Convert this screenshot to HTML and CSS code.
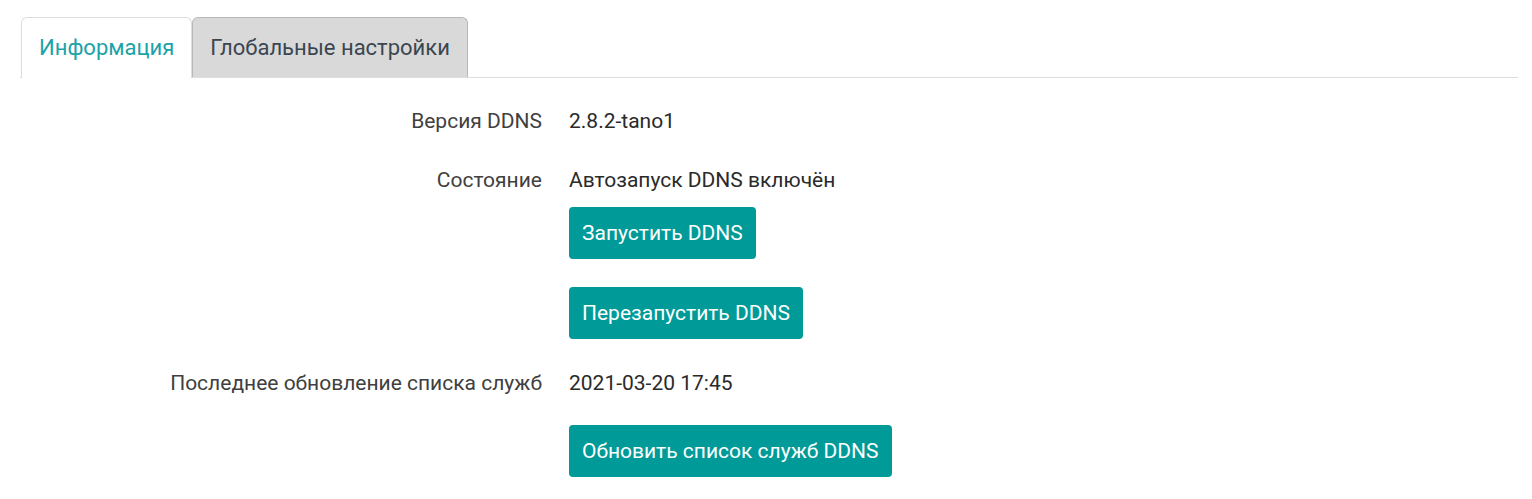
FILE: index.html
```html
<!DOCTYPE html>
<html>
<head>
	<meta charset="utf-8">
	<title>DDNS</title>
	<link rel="stylesheet" href="styles.css">
</head>
<body>
	<div class="page">
		<ul class="tabs">
			<li class="tab active">Информация</li>
			<li class="tab">Глобальные настройки</li>
		</ul>
		<div class="section">
			<div class="row">
				<div class="label">Версия DDNS</div>
				<div class="value">2.8.2-tano1</div>
			</div>
			<div class="row row-state">
				<div class="label">Состояние</div>
				<div class="value">
					Автозапуск DDNS включён
					<div class="actions">
						<button class="btn">Запустить DDNS</button>
						<button class="btn">Перезапустить DDNS</button>
					</div>
				</div>
			</div>
			<div class="row row-update">
				<div class="label">Последнее обновление списка служб</div>
				<div class="value">
					2021-03-20 17:45
					<div class="actions">
						<button class="btn">Обновить список служб DDNS</button>
					</div>
				</div>
			</div>
		</div>
	</div>
</body>
</html>
```

FILE: styles.css
```css
html, body {
	background: #fff;
	font: 21px Roboto, "Liberation Sans", Arial, sans-serif;
	margin: 0;
	padding: 0;
}
body {
	color: #333;
}
.page {
	padding: 17px 14px 0 20px;
}
.tabs {
	border-bottom: 1px solid #ddd;
	display: flex;
	list-style: none;
	margin: 0;
	padding: 0 0 0 1px;
}
.tab {
	background: #d9d9d9;
	border: 1px solid #b8b8b8;
	border-bottom: none;
	border-radius: 6px 6px 0 0;
	color: #3b4651;
	font-size: 22px;
	height: 59px;
	line-height: 59px;
	margin-bottom: -1px;
	padding: 0 17px;
}
.tab.active {
	background: #fff;
	border-color: #ddd;
	color: #1ba3a8;
	height: 60px;
}
.section {
	padding-top: 31px;
}
.row {
	column-gap: 27px;
	display: grid;
	grid-template-columns: 522px 1fr;
	line-height: 24px;
}
.label {
	color: #404040;
	text-align: right;
}
.value {
	color: #2a2a2a;
}
.row-state {
	margin-top: 35px;
}
.row-update {
	margin-top: 32px;
}
.actions {
	align-items: flex-start;
	display: flex;
	flex-direction: column;
	gap: 28px;
	margin-top: 15px;
}
.row-update .actions {
	margin-top: 30px;
}
.btn {
	background: #009b98;
	border: none;
	border-radius: 4px;
	color: #fff;
	font: inherit;
	height: 52px;
	padding: 0 13px;
}
```
